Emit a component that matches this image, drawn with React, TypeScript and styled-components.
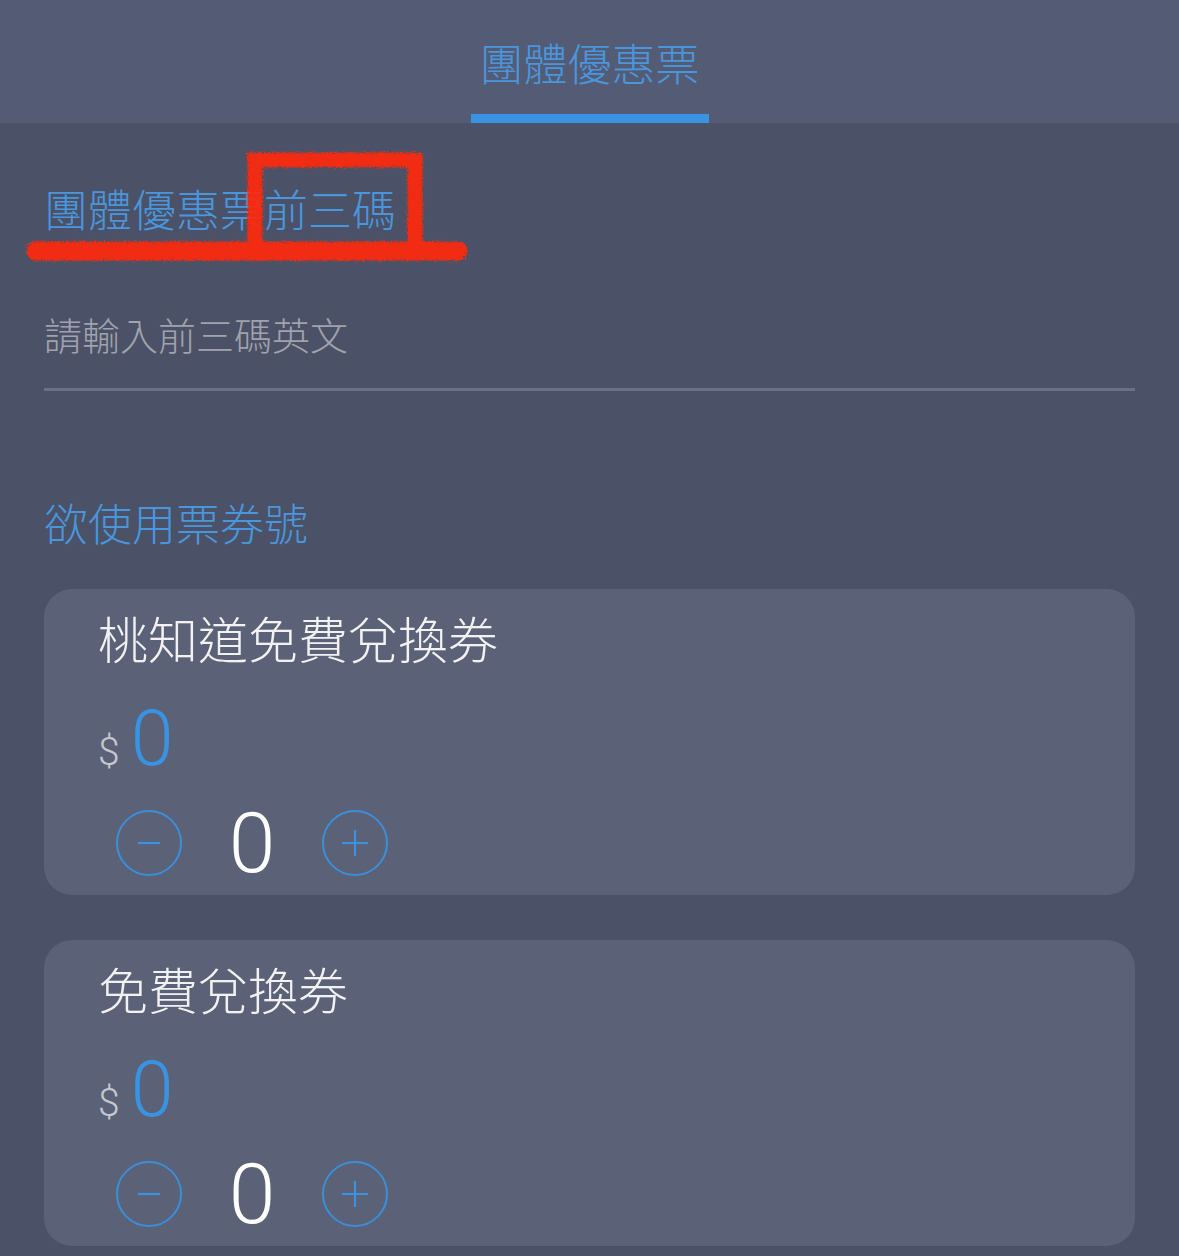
import React from "react";
import styled, { createGlobalStyle } from "styled-components";

const GlobalStyle = createGlobalStyle`
  html, body {
    margin: 0;
    padding: 0;
    background: #4b5166;
  }
  body {
    font-family: "Noto Sans CJK TC", "Noto Sans", sans-serif;
    -webkit-font-smoothing: antialiased;
  }
  * { box-sizing: border-box; }
`;

const Page = styled.div`
  position: relative;
  width: 1179px;
  min-height: 1256px;
  background: #4b5166;
  overflow: hidden;
`;

const Header = styled.header`
  height: 123px;
  background: #545b75;
  display: flex;
  justify-content: center;
`;

const Tab = styled.button`
  width: 238px;
  height: 123px;
  padding: 36px 0 0;
  margin: 0;
  border: none;
  background: transparent;
  display: flex;
  flex-direction: column;
  align-items: center;
  font-family: inherit;
  cursor: pointer;
`;

const TabText = styled.span`
  font-size: 44px;
  line-height: 53px;
  font-weight: 300;
  color: #4a96dc;
`;

const TabBar = styled.span<{ $active: boolean }>`
  margin-top: auto;
  width: 100%;
  height: 9px;
  background: ${(p) => (p.$active ? "#3a93e2" : "transparent")};
`;

const Body = styled.main`
  padding: 59px 44px 0;
  display: flex;
  flex-direction: column;
`;

const SectionLabel = styled.div<{ $gap: number }>`
  margin-top: ${(p) => p.$gap}px;
  font-size: 44px;
  line-height: 53px;
  font-weight: 300;
  color: #4a96dc;
`;

const InputField = styled.input`
  margin-top: 75px;
  width: 100%;
  height: 81px;
  padding: 0 0 32px 0;
  border: none;
  border-bottom: 3px solid #6b7187;
  background: transparent;
  font-family: "Noto Sans CJK TC", "Noto Sans", sans-serif;
  font-size: 38px;
  line-height: 46px;
  font-weight: 300;
  color: #e8e8ec;
  outline: none;
  &::placeholder {
    color: #a0a3ad;
  }
`;

const CardList = styled.div`
  margin-top: 40px;
  display: flex;
  flex-direction: column;
  gap: 45px;
`;

const Card = styled.section`
  background: #5b6176;
  border-radius: 28px;
  padding: 19px 54px 19px;
  display: flex;
  flex-direction: column;
`;

const CardTitle = styled.h3`
  margin: 0;
  font-size: 50px;
  line-height: 58px;
  font-weight: 300;
  color: #f2f2f4;
`;

const PriceRow = styled.div`
  margin-top: 35px;
  display: flex;
  align-items: baseline;
  gap: 11px;
  line-height: 1;
  font-family: Roboto, "Noto Sans", sans-serif;
  font-weight: 300;
`;

const Currency = styled.span`
  font-size: 39px;
  color: #c6c8d0;
`;

const Amount = styled.span`
  font-size: 77px;
  color: #3a93e2;
`;

const Stepper = styled.div`
  margin-top: 32px;
  margin-left: 18px;
  height: 66px;
  display: flex;
  align-items: center;
`;

const RoundButton = styled.button`
  width: 66px;
  height: 66px;
  padding: 0;
  border: 2px solid #3a8fdc;
  border-radius: 50%;
  background: transparent;
  display: flex;
  align-items: center;
  justify-content: center;
  cursor: pointer;
`;

const Count = styled.span`
  width: 140px;
  height: 66px;
  text-align: center;
  font-family: Roboto, "Noto Sans", sans-serif;
  font-weight: 300;
  font-size: 84px;
  line-height: 68px;
  color: #ffffff;
`;

const Annotation = styled.svg`
  position: absolute;
  left: 0;
  top: 0;
  pointer-events: none;
`;

const MinusIcon = () => (
  <svg width="26" height="26" viewBox="0 0 26 26">
    <path d="M2 13 H24" stroke="#3a93e2" strokeWidth="2.2" />
  </svg>
);

const PlusIcon = () => (
  <svg width="30" height="30" viewBox="0 0 30 30">
    <path d="M2 15 H28 M15 2 V28" stroke="#3a93e2" strokeWidth="2.2" />
  </svg>
);

type Ticket = { title: string; price: number; count: number };

const tickets: Ticket[] = [
  { title: "桃知道免費兌換券", price: 0, count: 0 },
  { title: "免費兌換券", price: 0, count: 0 },
];

export default function App() {
  return (
    <Page>
      <GlobalStyle />
      <Header>
        <Tab>
          <TabText>團體優惠票</TabText>
          <TabBar $active />
        </Tab>
      </Header>
      <Body>
        <SectionLabel $gap={0}>團體優惠票前三碼</SectionLabel>
        <InputField placeholder="請輸入前三碼英文" />
        <SectionLabel $gap={105}>欲使用票券號</SectionLabel>
        <CardList>
          {tickets.map((t) => (
            <Card key={t.title}>
              <CardTitle>{t.title}</CardTitle>
              <PriceRow>
                <Currency>$</Currency>
                <Amount>{t.price}</Amount>
              </PriceRow>
              <Stepper>
                <RoundButton aria-label="減少">
                  <MinusIcon />
                </RoundButton>
                <Count>{t.count}</Count>
                <RoundButton aria-label="增加">
                  <PlusIcon />
                </RoundButton>
              </Stepper>
            </Card>
          ))}
        </CardList>
      </Body>
      <Annotation width="1179" height="300" viewBox="0 0 1179 300">
        <defs>
          <filter id="rough" x="-10%" y="-30%" width="120%" height="160%">
            <feTurbulence type="fractalNoise" baseFrequency="0.9" numOctaves="2" seed="3" result="noise" />
            <feDisplacementMap in="SourceGraphic" in2="noise" scale="8" />
          </filter>
        </defs>
        <g filter="url(#rough)" fill="none" stroke="#ff2a08" opacity="0.93">
          <path d="M255 250 V160 H415 V250" strokeWidth="15" strokeLinejoin="miter" />
          <path d="M36 251 H458" strokeWidth="19" strokeLinecap="round" />
        </g>
      </Annotation>
    </Page>
  );
}
